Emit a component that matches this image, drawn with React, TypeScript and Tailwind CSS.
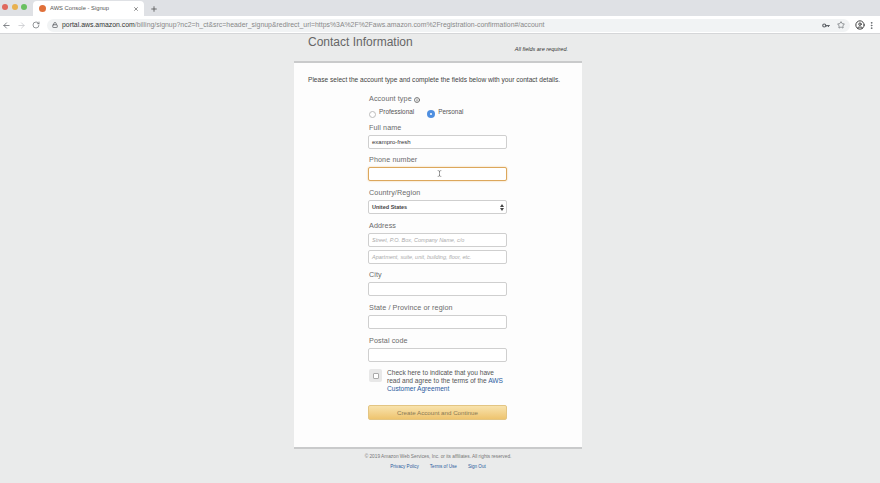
import { ArrowLeft, ArrowRight, RotateCw, Lock, Star, CircleUser, EllipsisVertical, Plus, X, Info, TextCursor } from "lucide-react"

function Label({ children }: { children: React.ReactNode }) {
  return <div className="h-[11px] pl-[1px] text-[7.2px] leading-[11px] tracking-[0.1px] text-[#6b6b6b]">{children}</div>
}

function Field({ placeholder, value, focused }: { placeholder?: string; value?: string; focused?: boolean }) {
  return (
    <div
      className={
        "flex h-[14px] w-[139px] items-center rounded-[2px] border bg-white pl-[3px] text-[5.5px] " +
        (focused ? "border-[#dca75c] shadow-[0_0_2px_#f0c98f]" : "border-[#cfcfcf]")
      }
    >
      {value && <span className="text-[6px] text-[#333]">{value}</span>}
      {placeholder && <span className="italic text-[#aaa]">{placeholder}</span>}
    </div>
  )
}

function KeyIcon() {
  return (
    <svg width="8" height="5" viewBox="0 0 16 10" className="ml-auto text-[#5f6368]">
      <circle cx="4.5" cy="5" r="3" fill="none" stroke="currentColor" strokeWidth="2.4" />
      <path d="M7 3.8h8.5v2.4h-1.5v2h-2v-2h-1.5v2h-1.5v-2H7z" fill="currentColor" />
    </svg>
  )
}

function Toolbar() {
  return (
    <div className="flex h-[18px] items-center border-b border-[#d5d6d8] bg-white pl-[2px] pr-[2px] pt-[1px]">
      <ArrowLeft size={9} strokeWidth={2} className="text-[#5f6368]" />
      <ArrowRight size={9} strokeWidth={2} className="ml-[6px] text-[#c4c6c9]" />
      <RotateCw size={8} strokeWidth={2} className="ml-[6px] text-[#5f6368]" />
      <div className="ml-[7px] flex h-[13px] w-[803px] shrink-0 items-center rounded-full bg-[#f1f3f4] pl-[5px] pr-[5px]">
        <Lock size={6} strokeWidth={3} className="text-[#5f6368]" />
        <span className="ml-[4px] whitespace-nowrap text-[6.9px] text-[#888]">
          <span className="text-[#333]">portal.aws.amazon.com</span>
          /billing/signup?nc2=h_ct&src=header_signup&redirect_url=https%3A%2F%2Faws.amazon.com%2Fregistration-confirmation#/account
        </span>
        <KeyIcon />
        <Star size={8} strokeWidth={2} className="ml-[7px] text-[#5f6368]" />
      </div>
      <CircleUser size={10} strokeWidth={2.4} className="ml-[5px] text-[#444]" />
      <EllipsisVertical size={9} strokeWidth={2.4} className="ml-[2px] text-[#5f6368]" />
    </div>
  )
}

function TabStrip() {
  return (
    <div className="flex h-[16px] items-end bg-[#dfe1e5] pl-[2px]">
      <div className="mb-[6px] flex gap-[3.5px]">
        <span className="h-[6px] w-[6px] rounded-full bg-[#e0685c]" />
        <span className="h-[6px] w-[6px] rounded-full bg-[#e8b04f]" />
        <span className="h-[6px] w-[6px] rounded-full bg-[#69c060]" />
      </div>
      <div className="ml-[6px] flex h-[15px] w-[111px] items-center rounded-t-[4px] bg-white pl-[6px] pr-[5px]">
        <span className="h-[7px] w-[7px] rounded-full bg-[#e0703a]" />
        <span className="ml-[4px] text-[5.8px] text-[#555]">AWS Console - Signup</span>
        <X size={6} strokeWidth={2.5} className="ml-auto text-[#555]" />
      </div>
      <Plus size={8} strokeWidth={2.5} className="mb-[3px] ml-[6px] text-[#555]" />
    </div>
  )
}

export default function App() {
  return (
    <div className="flex h-[483px] w-[880px] flex-col overflow-hidden bg-[#eaebeb] font-['Liberation_Sans',sans-serif]">
      <TabStrip />
      <Toolbar />
      <div className="ml-[294px] flex w-[288px] flex-col">
        <div className="flex h-[27px] items-start justify-between pl-[14px] pr-[14px]">
          <span className="text-[12px] leading-[16px] text-[#666]">Contact Information</span>
          <span className="mt-[11px] text-[5.5px] italic text-[#333]">All fields are required.</span>
        </div>
        <div className="flex h-[388px] flex-col border-t-2 border-b-2 border-[#c9cacb] bg-[#fdfdfd]">
          <p className="ml-[14px] mt-[12px] text-[6.6px] leading-[10px] text-[#444]">
            Please select the account type and complete the fields below with your contact details.
          </p>
          <div className="ml-[74px] mt-[9px] flex w-[139px] flex-col">
            <div className="flex h-[11px] items-center gap-[2px] pl-[1px] text-[7.2px] tracking-[0.1px] text-[#6b6b6b]">
              Account type <Info size={6} strokeWidth={3} className="text-[#555]" />
            </div>
            <div className="mt-[2px] flex h-[12px] items-center text-[6.4px] text-[#555]">
              <span className="ml-[1px] mt-[2px] h-[7px] w-[7px] rounded-full border border-[#bbb] bg-white" />
              <span className="ml-[3px] -mt-[2px]">Professional</span>
              <span className="ml-[13px] mt-[2px] flex h-[8px] w-[8px] items-center justify-center rounded-full bg-[#4f8fe0]">
                <span className="h-[2.5px] w-[2.5px] rounded-full bg-white" />
              </span>
              <span className="ml-[3px] -mt-[2px]">Personal</span>
            </div>
            <div className="mt-[3px]"><Label>Full name</Label></div>
            <div className="mt-[2px]"><Field value="exampro-fresh" /></div>
            <div className="mt-[5px]"><Label>Phone number</Label></div>
            <div className="relative mt-[2px]">
              <Field focused />
              <TextCursor size={7} strokeWidth={1.6} className="absolute left-[68px] top-[3px] text-[#444]" />
            </div>
            <div className="mt-[6px]"><Label>Country/Region</Label></div>
            <div className="mt-[2px] flex h-[14px] w-[139px] items-center justify-between rounded-[2px] border border-[#cfcfcf] bg-white pl-[3px] pr-[2px] text-[5.5px] font-bold text-[#444]">
              United States
              <svg width="4" height="7" viewBox="0 0 4 7" className="text-[#444]">
                <path d="M2 0l2 3H0zM2 7L0 4h4z" fill="currentColor" />
              </svg>
            </div>
            <div className="mt-[6px]"><Label>Address</Label></div>
            <div className="mt-[2px]"><Field placeholder="Street, P.O. Box, Company Name, c/o" /></div>
            <div className="mt-[3px]"><Field placeholder="Apartment, suite, unit, building, floor, etc." /></div>
            <div className="mt-[5px]"><Label>City</Label></div>
            <div className="mt-[2px]"><Field /></div>
            <div className="mt-[6px]"><Label>State / Province or region</Label></div>
            <div className="mt-[2px]"><Field /></div>
            <div className="mt-[6px]"><Label>Postal code</Label></div>
            <div className="mt-[2px]"><Field /></div>
            <div className="mt-[7px] flex">
              <div className="ml-[1px] flex h-[13px] w-[13px] shrink-0 items-center justify-center rounded-[2px] bg-[#e8e8e8]">
                <span className="h-[6px] w-[6px] rounded-[1px] border border-[#aaa] bg-white" />
              </div>
              <p className="ml-[5px] text-[6.6px] leading-[8px] text-[#555]">
                Check here to indicate that you have read and agree to the terms of the <span className="text-[#2b5c9e]">AWS Customer Agreement</span>
              </p>
            </div>
            <div className="mt-[12px] flex h-[15px] w-[139px] items-center justify-center rounded-[2px] border border-[#e3c583] bg-gradient-to-b from-[#f8e3ad] to-[#eec46e] text-[6.2px] text-[#8a7a55]">
              Create Account and Continue
            </div>
          </div>
        </div>
        <div className="mt-[4px] text-center text-[4.75px] leading-[7px] text-[#777]">
          © 2019 Amazon Web Services, Inc. or its affiliates. All rights reserved.
        </div>
        <div className="mt-[3px] flex justify-center text-[4.6px] leading-[7px] text-[#2b5c9e]">
          <span>Privacy Policy</span>
          <span className="ml-[11px]">Terms of Use</span>
          <span className="ml-[11px]">Sign Out</span>
        </div>
      </div>
    </div>
  )
}
